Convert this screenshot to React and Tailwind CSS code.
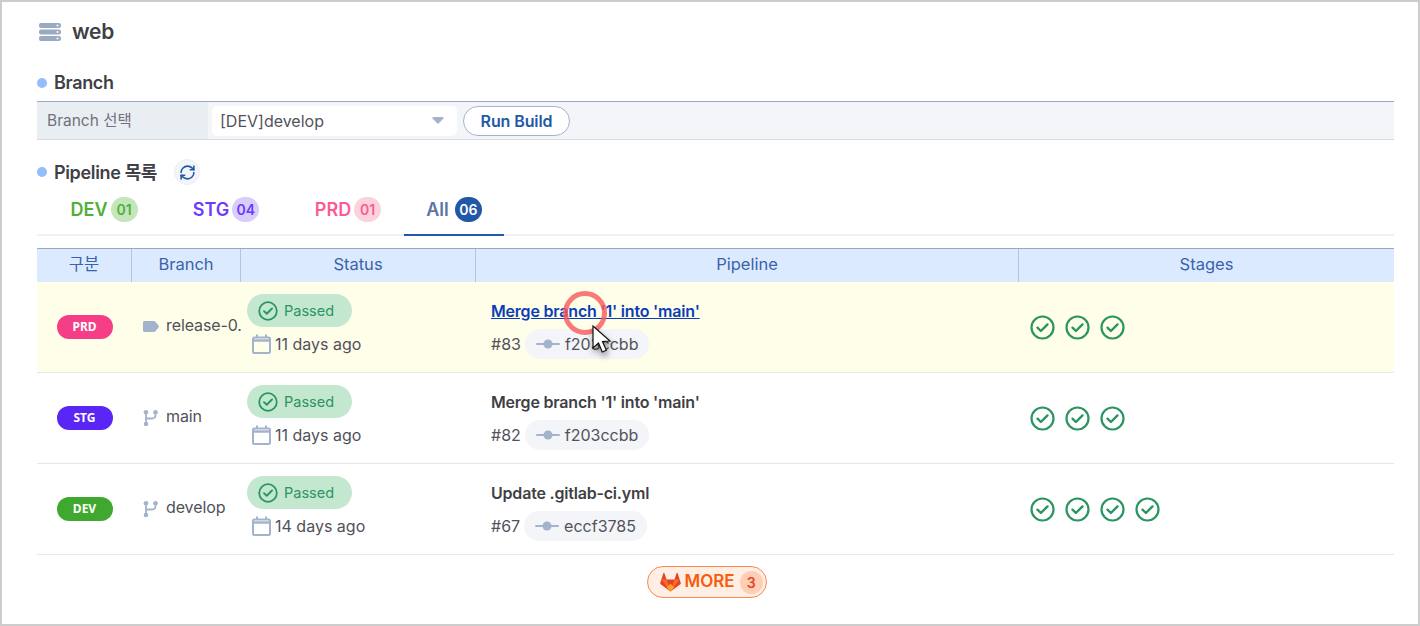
import { RefreshCw } from 'lucide-react';

const rows = [
  {
    env: 'PRD',
    envClass: 'bg-[#f53e86]',
    icon: 'tag',
    branch: 'release-0.',
    time: '11 days ago',
    title: "Merge branch '1' into 'main'",
    id: '#83',
    sha: 'f203ccbb',
    stages: 3,
    hover: true,
  },
  {
    env: 'STG',
    envClass: 'bg-[#5a26f5]',
    icon: 'branch',
    branch: 'main',
    time: '11 days ago',
    title: "Merge branch '1' into 'main'",
    id: '#82',
    sha: 'f203ccbb',
    stages: 3,
  },
  {
    env: 'DEV',
    envClass: 'bg-[#3fa92f]',
    icon: 'branch',
    branch: 'develop',
    time: '14 days ago',
    title: 'Update .gitlab-ci.yml',
    id: '#67',
    sha: 'eccf3785',
    stages: 4,
  },
];

const tabs = [
  { label: 'DEV', count: '01', text: 'text-[#4fb03a]', badge: 'bg-[#c5e6bd]' },
  { label: 'STG', count: '04', text: 'text-[#6c3bfa]', badge: 'bg-[#d8cdfb]' },
  { label: 'PRD', count: '01', text: 'text-[#fb5c97]', badge: 'bg-[#fbd3da]' },
];

function CheckCircle({ size = 'w-[25px] h-[25px]' }) {
  return (
    <svg viewBox="0 0 25 25" className={size} fill="none" stroke="#2a9560">
      <circle cx="12.5" cy="12.5" r="11" strokeWidth="2.2" />
      <path d="M7.5 12.7l3.4 3.3 6.6-6.6" strokeWidth="2.4" strokeLinecap="round" strokeLinejoin="round" />
    </svg>
  );
}

function ServerIcon() {
  return (
    <svg viewBox="0 0 22 18" className="w-[22px] h-[18px]" fill="#9aaac3">
      <rect x="0" y="0" width="22" height="5" rx="2" />
      <rect x="0" y="6.5" width="22" height="5" rx="2" />
      <rect x="0" y="13" width="22" height="5" rx="2" />
      <circle cx="18.5" cy="2.5" r="1" fill="#fff" />
      <circle cx="18.5" cy="9" r="1" fill="#fff" />
      <circle cx="18.5" cy="15.5" r="1" fill="#fff" />
    </svg>
  );
}

function TagIcon() {
  return (
    <svg viewBox="0 0 16 12" className="w-[16px] h-[12px] shrink-0 translate-y-[2px]" fill="#a3b3cc">
      <path d="M1.500 0.500h9.500c.5 0 .9.2 1.200.5l3.500 4.200c.4.500.4 1.200 0 1.600l-3.500 4.200c-.3.300-.7.500-1.200.5H1.500c-.8 0-1.500-.7-1.500-1.500V2c0-.8.700-1.500 1.500-1.500z" />
    </svg>
  );
}

function BranchIcon() {
  return (
    <svg viewBox="0 0 16 17" className="w-[16px] h-[17px] shrink-0 translate-y-[2px]" fill="none" stroke="#a3b3cc" strokeWidth="1.800">
      <path d="M3 3v11" />
      <path d="M12.500 3v2.500c0 2-1.500 3.500-3.500 3.500H3" />
      <circle cx="3" cy="2.800" r="2.300" fill="#a3b3cc" stroke="none" />
      <circle cx="12.500" cy="2.800" r="2.300" fill="#a3b3cc" stroke="none" />
      <circle cx="3" cy="14.500" r="2.300" fill="#a3b3cc" stroke="none" />
    </svg>
  );
}

function CalendarIcon() {
  return (
    <svg viewBox="0 0 19 20" className="w-[19px] h-[20px] shrink-0" fill="none" stroke="#a3b3cc">
      <rect x="1" y="3.500" width="17" height="15.500" rx="1.500" strokeWidth="2" />
      <path d="M1 6.500h17" strokeWidth="2.500" />
      <path d="M5 0.500v3.500M14 0.500v3.500" strokeWidth="2" />
    </svg>
  );
}

function CommitIcon() {
  return (
    <svg viewBox="0 0 24 10" className="w-[24px] h-[10px] shrink-0" fill="#a3b3cc">
      <rect x="0" y="4" width="24" height="2" rx="1" />
      <circle cx="12" cy="5" r="4.500" />
    </svg>
  );
}

function GitlabLogo() {
  return (
    <svg viewBox="0 0 24 23" className="w-[21px] h-[20px] shrink-0">
      <path d="M12 22.500L0.700 14.200c-.5-.4-.7-1-.5-1.600L3.900 1.200c.1-.5.8-.5 1 0l2.500 7.500h9.200l2.500-7.500c.2-.5.900-.5 1 0l3.700 11.400c.2.600 0 1.200-.5 1.600z" fill="#e24329" />
      <path d="M12 22.500L7.400 8.700H1.800z" fill="#fc6d26" />
      <path d="M12 22.500l4.600-13.800h5.600z" fill="#fc6d26" />
      <path d="M12 22.500l-4.200-5.100L12 13.500l4.200 3.900z" fill="#fca326" />
    </svg>
  );
}

function SectionTitle({ children }) {
  return (
    <div className="flex items-center gap-[7px]">
      <span className="w-[10px] h-[10px] rounded-full bg-[#93bdfb]" />
      <h2 className="text-[18px] font-semibold tracking-[-0.35px] text-[#3f3f46]">{children}</h2>
    </div>
  );
}

function Cursor() {
  return (
    <div className="absolute left-[87px] top-[9px] w-[50px] h-[72px] pointer-events-none">
      <span className="absolute left-0 top-0 w-[44px] h-[44px] rounded-full border-[5px] border-[#f8575a]/80" />
      <svg viewBox="0 0 22 30" className="absolute left-[29px] top-[34px] w-[22px] h-[30px] drop-shadow-[1px_4px_3px_rgba(0,0,0,0.45)]">
        <path d="M1 1l0 22 5.500-5 3.800 9 4-1.800-3.800-8.700 7.500-.5z" fill="#fff" stroke="#111" strokeWidth="1.200" />
      </svg>
    </div>
  );
}

function Row({ row }) {
  return (
    <div className={`grid grid-cols-[95px_109px_235px_543px_1fr] h-[91px] border-b border-[#e5e7eb] ${row.hover ? 'bg-[#fffee9]' : 'bg-white'}`}>
      <div className="flex items-center justify-center">
        <span className={`w-[56px] h-[24px] rounded-full flex items-center justify-center text-white text-[12px] font-bold ${row.envClass}`} style={{ fontFamily: '"Noto Sans", sans-serif' }}>
          {row.env}
        </span>
      </div>
      <div className="flex items-center gap-[7px] pl-[11px] whitespace-nowrap text-[16px] tracking-[-0.1px] text-[#52525b] -translate-y-[2.5px]">
        {row.icon === 'tag' ? <TagIcon /> : <BranchIcon />}
        <span>{row.branch}</span>
      </div>
      <div className="flex flex-col items-start pl-[6px] pt-[12px]">
        <span className="flex items-center gap-[6px] h-[33px] w-[105px] rounded-full bg-[#c4e7cf] pl-[11px] text-[14.5px] text-[#2a9560]">
          <CheckCircle size="w-[20px] h-[20px]" />
          Passed
        </span>
        <span className="flex items-center gap-[4px] mt-[5px] pl-[5px] text-[16px] text-[#52525b]">
          <CalendarIcon />
          {row.time}
        </span>
      </div>
      <div className="relative flex flex-col items-start pl-[15px] pt-[17px]">
        <span className={`text-[16px] font-semibold tracking-[-0.2px] leading-[24px] ${row.hover ? 'text-[#0b3db8] underline' : 'text-[#3f3f46]'}`}>
          {row.title}
        </span>
        <div className="flex items-center gap-[4px] mt-[6px] text-[16px] text-[#52525b]">
          {row.id}
          <span className="flex items-center gap-[5px] h-[30px] px-[11px] rounded-full bg-[#f3f5f9]">
            <CommitIcon />
            {row.sha}
          </span>
        </div>
        {row.hover && <Cursor />}
      </div>
      <div className="flex items-center gap-[10px] pl-[11px]">
        {Array.from({ length: row.stages }).map((_, i) => (
          <CheckCircle key={i} />
        ))}
      </div>
    </div>
  );
}

export default function App() {
  return (
    <div
      className="w-[1420px] h-[626px] overflow-hidden border-2 border-[#cccccc] bg-white pl-[35px] pr-[24px]"
      style={{ fontFamily: 'Inter, "Noto Sans CJK KR", sans-serif' }}
    >
      <div className="flex items-center gap-[11px] h-[26px] mt-[17px] pl-[2px]">
        <ServerIcon />
        <h1 className="text-[21px] font-semibold tracking-[-0.3px] text-[#3f3f46]">web</h1>
      </div>

      <div className="mt-[24px]">
        <SectionTitle>Branch</SectionTitle>
      </div>

      <div className="flex items-center h-[39px] mt-[5px] border-t border-b border-t-[#97a9c6] border-b-[#d5dbe3] bg-[#f3f5f8]">
        <div className="w-[171px] h-full flex items-center pl-[10px] bg-[#e9eef3] text-[15.5px] text-[#71717a]">Branch 선택</div>
        <div className="ml-[4px] w-[245px] h-[30px] flex items-center justify-between pl-[8px] pr-[12px] rounded-[5px] bg-white text-[16px] text-[#52525b]">
          [DEV]develop
          <span className="w-0 h-0 border-x-[7px] border-x-transparent border-t-[7px] border-t-[#a3b3cc] rounded-sm" />
        </div>
        <button className="ml-[6px] w-[107px] h-[30px] rounded-full border border-[#a3b3cc] bg-white text-[16px] font-semibold tracking-[-0.1px] text-[#2158a8]">
          Run Build
        </button>
      </div>

      <div className="flex items-center gap-[17px] h-[28px] mt-[18px]">
        <SectionTitle>Pipeline 목록</SectionTitle>
        <span className="w-[26px] h-[26px] rounded-full bg-[#f3f5f9] border border-[#eaeef3] flex items-center justify-center">
          <RefreshCw className="w-[17px] h-[17px] text-[#2158a8]" strokeWidth={2.2} />
        </span>
      </div>

      <div className="flex h-[50px] border-b-2 border-[#eef1f5] pl-[6px]">
        {tabs.map((t) => (
          <div key={t.label} className={`w-[122px] h-full pb-[2px] flex items-center justify-center gap-[3px] text-[18px] font-semibold ${t.text}`}>
            {t.label}
            <span className={`w-[27px] h-[25px] rounded-full flex items-center justify-center text-[14px] ${t.badge}`}>{t.count}</span>
          </div>
        ))}
        <div className="w-[100px] h-[50px] -ml-[5px] pb-[2px] flex items-center justify-center gap-[6px] border-b-2 border-[#2158a8] text-[18px] font-semibold text-[#5c76a3]">
          All
          <span className="w-[27px] h-[25px] rounded-full flex items-center justify-center text-[14px] text-white bg-[#2158a8]">06</span>
        </div>
      </div>

      <div className="mt-[12px]">
        <div className="grid grid-cols-[95px_109px_235px_543px_1fr] h-[34px] pb-[2px] border-t border-[#97a9c6] bg-[#dbeafe] text-[16.5px] text-[#3a63ad]">
          <div className="flex items-center justify-center border-r border-[#b5c4da] -mb-[2px] pb-[2px]">구분</div>
          <div className="flex items-center justify-center border-r border-[#b5c4da] -mb-[2px] pb-[2px]">Branch</div>
          <div className="flex items-center justify-center border-r border-[#b5c4da] -mb-[2px] pb-[2px]">Status</div>
          <div className="flex items-center justify-center border-r border-[#b5c4da] -mb-[2px] pb-[2px]">Pipeline</div>
          <div className="flex items-center justify-center">Stages</div>
        </div>
        {rows.map((row) => (
          <Row key={row.id} row={row} />
        ))}
      </div>

      <div className="flex justify-center mt-[11px] pr-[18px]">
        <span className="flex items-center gap-[4px] w-[120px] h-[32px] pl-[12px] rounded-full border border-[#f98a4f] bg-[#ffeee3] text-[17px] font-semibold text-[#fa5a0a]">
          <GitlabLogo />
          MORE
          <span className="w-[23px] h-[23px] ml-[1px] rounded-full bg-[#fdcdb4] flex items-center justify-center text-[14px] text-[#e0482c]">3</span>
        </span>
      </div>
    </div>
  );
}
